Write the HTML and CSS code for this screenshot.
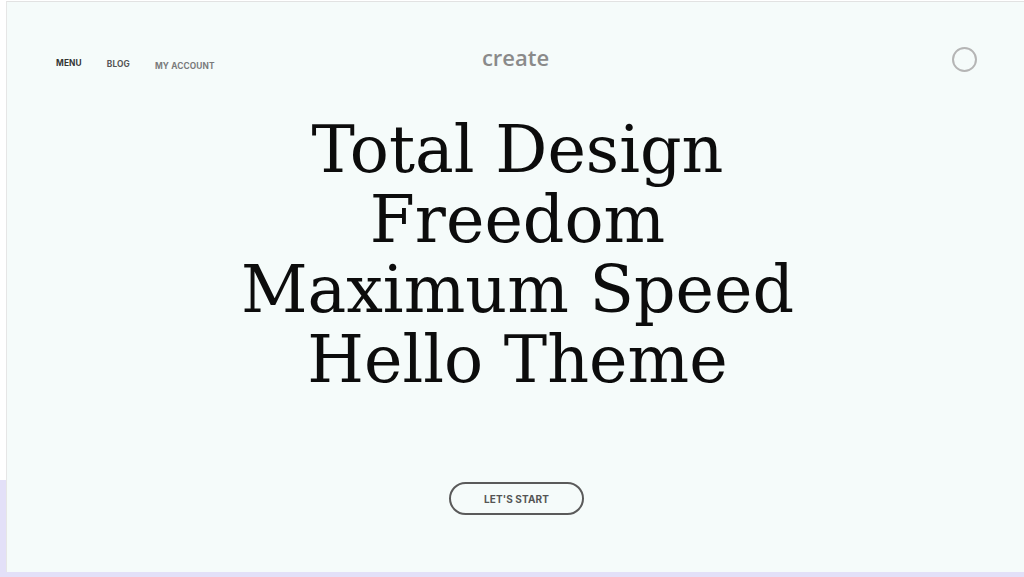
FILE: index.html
```html
<!DOCTYPE html>
<html lang="en">
<head>
<meta charset="utf-8">
<title>Hello Theme</title>
<link rel="stylesheet" href="styles.css">
</head>
<body>
<div class="page">
  <header class="header">
    <nav class="nav">
      <a class="nav-link nav-menu" href="#">MENU</a>
      <a class="nav-link nav-blog" href="#">BLOG</a>
      <a class="nav-link nav-account" href="#">MY ACCOUNT</a>
    </nav>
    <div class="logo">create</div>
    <div class="actions"><span class="circle"></span></div>
  </header>
  <main class="hero">
    <h1 class="title">
      <span class="line">Total Design</span>
      <span class="line">Freedom</span>
      <span class="line">Maximum Speed</span>
      <span class="line">Hello Theme</span>
    </h1>
    <a class="cta" href="#">LET'S START</a>
  </main>
</div>
<div class="bottom-strip"></div>
</body>
</html>
```
FILE: styles.css
```css
html, body {
  margin: 0;
  padding: 0;
}
body {
  width: 1024px;
  height: 577px;
  overflow: hidden;
  background: linear-gradient(to bottom, #ffffff 480px, #e3e0f8 480px);
  font-family: "Inter", "Liberation Sans", sans-serif;
  display: flex;
  flex-direction: column;
}
.page {
  margin: 1px 0 0 6px;
  height: 570px;
  background: #f5fbfa;
  border-top: 1px solid #e2e2e2;
  border-left: 1px solid #e6e6e6;
  display: flex;
  flex-direction: column;
}
.bottom-strip {
  height: 5px;
  background: #e3e0f8;
}
.header {
  display: grid;
  grid-template-columns: 1fr auto 1fr;
  align-items: center;
  padding: 42px 47px 0 49px;
  height: 30px;
}
.nav {
  display: flex;
  align-items: center;
  gap: 25px;
}
.nav-link {
  text-decoration: none;
  font-size: 8.3px;
  font-weight: 700;
  letter-spacing: 0.15px;
}
.nav-menu { color: #333; margin-top: 7px; }
.nav-blog { color: #555; margin-top: 9px; }
.nav-account { color: #7a7a7a; margin-top: 13px; }
.logo {
  font-family: "Open Sans", sans-serif;
  font-weight: 600;
  font-size: 22px;
  color: #8a8a8a;
  margin-top: -5px;
  margin-left: -2px;
}
.actions {
  display: flex;
  justify-content: flex-end;
}
.circle {
  width: 21px;
  height: 21px;
  border: 2px solid #b5b5b5;
  border-radius: 50%;
}
.hero {
  display: flex;
  flex-direction: column;
  align-items: center;
}
.title {
  margin: 41px 0 0;
  font-family: "DejaVu Serif", serif;
  font-weight: 400;
  font-size: 65px;
  line-height: 70px;
  text-align: center;
  color: #0c0c0c;
  display: flex;
  flex-direction: column;
  align-items: center;
}
.line {
  display: block;
  height: 70px;
  margin-left: 4px;
}
.cta {
  margin-top: 87px;
  margin-left: 2px;
  width: 131px;
  height: 29px;
  border: 2px solid #5a5a5a;
  border-radius: 17px;
  display: flex;
  align-items: center;
  justify-content: center;
  text-decoration: none;
  font-size: 10px;
  font-weight: 700;
  color: #555;
  letter-spacing: 0.1px;
}
```
